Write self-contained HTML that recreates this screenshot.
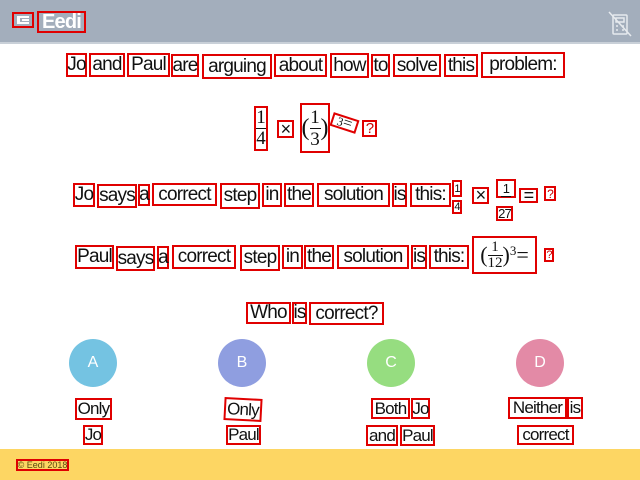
<!DOCTYPE html>
<html><head><meta charset="utf-8"><style>
body{margin:0;width:640px;height:480px;position:relative;overflow:hidden;background:#fff;font-family:"Liberation Sans",sans-serif;}
.hd{position:absolute;left:0;top:0;width:640px;height:42px;background:#a3aebc;border-bottom:2px solid #c9d0d8;}
.ft{position:absolute;left:0;top:449px;width:640px;height:31px;background:#fdd663;}
.b{position:absolute;border:2px solid #e00000;box-sizing:border-box;display:flex;align-items:center;justify-content:center;white-space:nowrap;font-size:19px;color:#111;letter-spacing:-0.8px;overflow:visible}
.c{position:absolute;width:48px;height:48px;border-radius:50%;color:#fff;font-size:16px;display:flex;align-items:center;justify-content:center}
.m{font-family:"Liberation Serif",serif;letter-spacing:0}
.s{font-size:17px}
</style></head><body>
<div class="hd"></div>
<div class="b" style="left:12px;top:12px;width:22px;height:16px;"><div style="width:12px;height:8px;border-left:3px solid #fff;border-top:2px solid #fff;border-bottom:2px solid #fff;box-sizing:border-box;position:relative"><div style="position:absolute;left:2px;top:1px;width:7px;height:2px;background:#fff"></div></div></div>
<div class="b" style="left:37px;top:11px;width:49px;height:22px;color:#fff;font-weight:bold;font-size:20px;">Eedi</div>
<svg style="position:absolute;left:606px;top:10px" width="28" height="28" viewBox="0 0 28 28" fill="none" stroke="#e6eaee" stroke-width="1.5"><rect x="7" y="5" width="14" height="19" rx="1"/><rect x="10" y="8" width="8" height="4"/><path d="M10 16h2M16 16h2M10 20h2M16 20h2M3 2L25 26"/></svg>

<div class="b" style="left:66px;top:53px;width:21px;height:24px">Jo</div>
<div class="b" style="left:89px;top:53px;width:36px;height:24px">and</div>
<div class="b" style="left:127px;top:53px;width:43px;height:24px">Paul</div>
<div class="b" style="left:171px;top:54px;width:28px;height:23px">are</div>
<div class="b" style="left:202px;top:54px;width:70px;height:25px">arguing</div>
<div class="b" style="left:274px;top:54px;width:53px;height:23px">about</div>
<div class="b" style="left:330px;top:53px;width:39px;height:25px">how</div>
<div class="b" style="left:371px;top:54px;width:19px;height:23px">to</div>
<div class="b" style="left:393px;top:54px;width:48px;height:23px">solve</div>
<div class="b" style="left:444px;top:54px;width:34px;height:23px">this</div>
<div class="b" style="left:481px;top:52px;width:84px;height:26px">problem:</div>

<div class="b m" style="left:254px;top:106px;width:14px;height:45px;flex-direction:column;font-size:19px;line-height:20px"><span>1</span><span style="border-top:1.5px solid #111;width:10px"></span><span>4</span></div>
<div class="b" style="left:277px;top:120px;width:17px;height:18px;font-size:18px">×</div>
<div class="b m" style="left:300px;top:103px;width:30px;height:50px;font-size:24px">(<span style="display:inline-flex;flex-direction:column;align-items:center;font-size:19px;line-height:21px"><span>1</span><span style="border-top:1.5px solid #111;width:11px"></span><span>3</span></span>)</div>
<div class="b m" style="left:331px;top:116px;width:27px;height:14px;transform:rotate(18deg);font-size:16px"><sup style="font-size:12px">3</sup>=</div>
<div class="b" style="left:362px;top:120px;width:15px;height:17px;color:#c00;font-size:15px">?</div>

<div class="b" style="left:73px;top:183px;width:22px;height:24px">Jo</div>
<div class="b" style="left:97px;top:184px;width:40px;height:24px">says</div>
<div class="b" style="left:138px;top:184px;width:12px;height:22px">a</div>
<div class="b" style="left:152px;top:183px;width:65px;height:23px">correct</div>
<div class="b" style="left:220px;top:183px;width:40px;height:26px">step</div>
<div class="b" style="left:262px;top:183px;width:20px;height:24px">in</div>
<div class="b" style="left:284px;top:183px;width:30px;height:24px">the</div>
<div class="b" style="left:317px;top:183px;width:73px;height:24px">solution</div>
<div class="b" style="left:392px;top:183px;width:15px;height:24px">is</div>
<div class="b" style="left:410px;top:183px;width:41px;height:24px">this:</div>
<div class="b" style="left:452px;top:180px;width:10px;height:17px;font-size:11px">1</div>
<div class="b" style="left:452px;top:200px;width:10px;height:14px;font-size:11px">4</div>
<div class="b" style="left:472px;top:187px;width:17px;height:17px;font-size:18px">×</div>
<div class="b" style="left:496px;top:179px;width:20px;height:19px;font-size:13px;align-items:flex-start"><span style="border-bottom:1.5px solid #111;padding:0 2px">1</span></div>
<div class="b" style="left:496px;top:206px;width:17px;height:15px;font-size:13px">27</div>
<div class="b" style="left:519px;top:188px;width:19px;height:15px;font-size:18px">=</div>
<div class="b" style="left:544px;top:186px;width:12px;height:15px;color:#c00;font-size:12px">?</div>

<div class="b" style="left:75px;top:245px;width:39px;height:24px">Paul</div>
<div class="b" style="left:116px;top:246px;width:39px;height:25px">says</div>
<div class="b" style="left:157px;top:246px;width:12px;height:23px">a</div>
<div class="b" style="left:172px;top:245px;width:64px;height:24px">correct</div>
<div class="b" style="left:240px;top:245px;width:40px;height:26px">step</div>
<div class="b" style="left:282px;top:245px;width:21px;height:24px">in</div>
<div class="b" style="left:304px;top:245px;width:30px;height:24px">the</div>
<div class="b" style="left:337px;top:245px;width:72px;height:24px">solution</div>
<div class="b" style="left:411px;top:245px;width:16px;height:24px">is</div>
<div class="b" style="left:429px;top:245px;width:40px;height:24px">this:</div>
<div class="b m" style="left:472px;top:236px;width:65px;height:38px;font-size:22px">(<span style="display:inline-flex;flex-direction:column;align-items:center;font-size:15px;line-height:15px"><span>1</span><span style="border-top:1px solid #111;width:15px"></span><span>12</span></span>)<sup style="font-size:13px;align-self:flex-start;margin-top:5px">3</sup>=</div>
<div class="b" style="left:544px;top:248px;width:10px;height:14px;color:#c00;font-size:11px">?</div>

<div class="b" style="left:246px;top:302px;width:45px;height:22px">Who</div>
<div class="b" style="left:292px;top:302px;width:15px;height:22px">is</div>
<div class="b" style="left:309px;top:302px;width:75px;height:23px">correct?</div>

<div class="c" style="left:69px;top:339px;background:#74c3e2">A</div>
<div class="c" style="left:218px;top:339px;background:#8f9ee0">B</div>
<div class="c" style="left:367px;top:339px;background:#96dd80">C</div>
<div class="c" style="left:516px;top:339px;background:#e38aa6">D</div>

<div class="b s" style="left:75px;top:398px;width:37px;height:22px">Only</div>
<div class="b s" style="left:83px;top:425px;width:20px;height:20px">Jo</div>
<div class="b s" style="left:224px;top:398px;width:38px;height:23px;transform:rotate(3deg)">Only</div>
<div class="b s" style="left:226px;top:425px;width:35px;height:20px">Paul</div>
<div class="b s" style="left:371px;top:398px;width:39px;height:21px">Both</div>
<div class="b s" style="left:411px;top:398px;width:19px;height:21px">Jo</div>
<div class="b s" style="left:366px;top:425px;width:32px;height:21px">and</div>
<div class="b s" style="left:400px;top:425px;width:35px;height:21px">Paul</div>
<div class="b s" style="left:508px;top:397px;width:59px;height:22px">Neither</div>
<div class="b s" style="left:567px;top:397px;width:16px;height:22px">is</div>
<div class="b s" style="left:517px;top:425px;width:57px;height:20px">correct</div>

<div class="ft"></div>
<div class="b" style="left:16px;top:459px;width:53px;height:12px;font-size:9px;color:#5a4a10;letter-spacing:0">© Eedi 2018</div>
</body></html>
